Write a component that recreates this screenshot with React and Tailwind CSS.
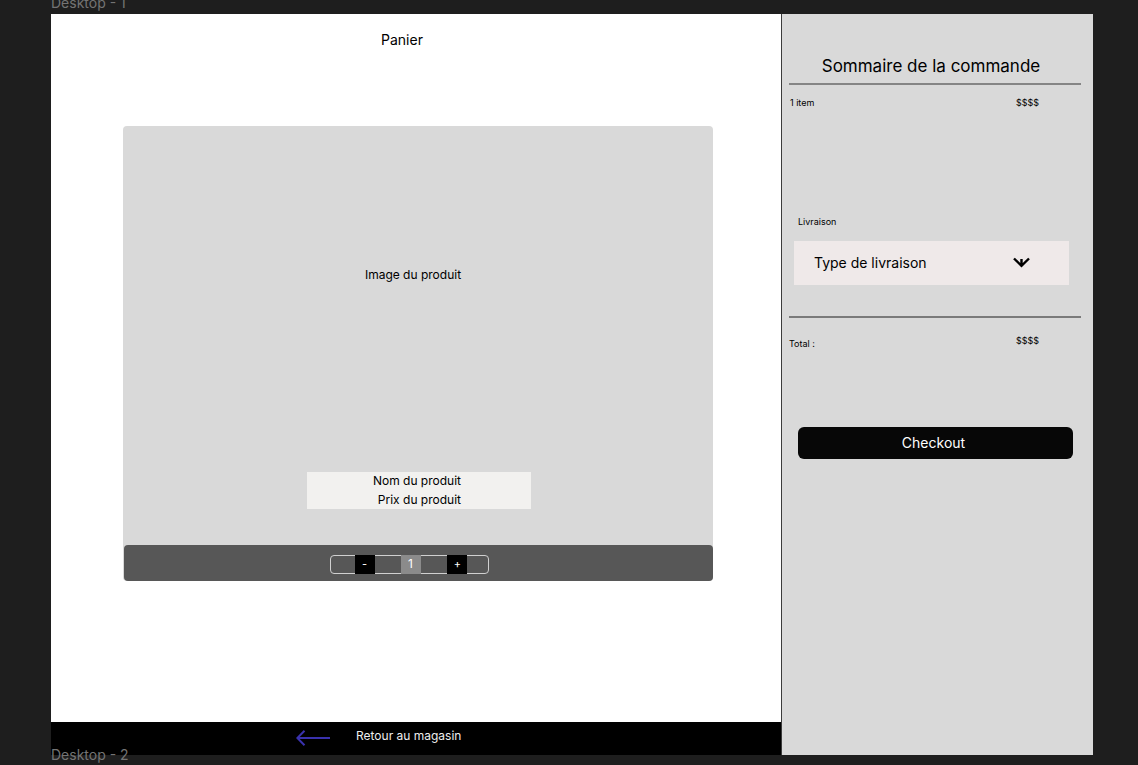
function FrameLabel({ children }) {
  return <p className="text-[14px] leading-5 text-[#747474]">{children}</p>;
}

function BackArrow() {
  return (
    <svg width="34" height="16" viewBox="0 0 34 16" fill="none" stroke="#3a32ae" strokeWidth="2" aria-hidden="true">
      <path d="M34 8H1.5M8.5 0.7L1.3 8L8.5 15.3" />
    </svg>
  );
}

function DownArrow() {
  return (
    <svg
      className="pointer-events-none absolute top-4 right-[39px]"
      width="17"
      height="12"
      viewBox="0 0 17 12"
      fill="none"
      stroke="#000"
      strokeWidth="2.4"
      aria-hidden="true"
    >
      <path d="M1 1.5L8.5 8.8L16 1.5M8.5 2V9" />
    </svg>
  );
}

function Product() {
  return (
    <article className="mt-[76px] mr-[68px] ml-[72px] flex flex-col rounded-[4px] bg-[#d9d9d9]">
      <div className="flex h-[346px] justify-center pt-[139px] pr-2.5">
        <p className="text-[12px] leading-5">Image du produit</p>
      </div>
      <div className="ml-0.5 flex w-56 flex-col gap-px self-center bg-[#f2f1ef] pr-[70px] text-right text-[12px] leading-[18px]">
        <h2>Nom du produit</h2>
        <p>Prix du produit</p>
      </div>
      <div className="mt-9 ml-px flex h-9 items-center justify-center rounded-[4px] bg-[#575757] pr-[18px] pt-0.5">
        <div className="flex h-[19px] w-[159px] items-stretch justify-center gap-[26px] rounded-[4px] border border-[#d0d0d0] pl-0.5 text-[11px] leading-4 text-white">
          <button type="button" aria-label="Diminuer la quantité" className="-my-px w-5 bg-black">-</button>
          <input
            type="text"
            aria-label="Quantité"
            defaultValue="1"
            className="-my-px w-5 bg-[#8b8b8b] text-center text-[12px]"
          />
          <button type="button" aria-label="Augmenter la quantité" className="-my-px w-5 bg-black pl-0.5">+</button>
        </div>
      </div>
    </article>
  );
}

function Summary() {
  return (
    <aside className="w-[312px] shrink-0 border-l border-[#3c3c3c] bg-[#d9d9d9] pr-3 pl-[7px]">
      <h2 className="border-b-2 border-[#858585] pt-10 pb-[5px] pr-2 text-center text-[17px] leading-6">
        Sommaire de la commande
      </h2>
      <div className="mt-3 flex justify-between pr-[42px] pl-px text-[9px] leading-3">
        <span>1 item</span>
        <span>$$$$</span>
      </div>
      <div className="mt-[107px] mr-3 ml-[5px]">
        <label htmlFor="livraison" className="block pl-1 text-[9px] leading-3">
          Livraison
        </label>
        <div className="relative mt-[13px]">
          <select
            id="livraison"
            className="h-11 w-full appearance-none bg-[#efe9e9] px-5 text-[14px] leading-5"
          >
            <option>Type de livraison</option>
          </select>
          <DownArrow />
        </div>
      </div>
      <div className="mt-[31px] flex justify-between border-t-2 border-[#7a7a7a] pt-[17px] pr-[42px] text-[9px] leading-3">
        <span className="pt-[3px]">Total :</span>
        <span>$$$$</span>
      </div>
      <div className="mt-[77px] mr-2 ml-[9px]">
        <button type="button" className="block h-8 w-full rounded-[6px] bg-[#070707] pr-1 text-[14px] leading-5 text-white">
          Checkout
        </button>
      </div>
    </aside>
  );
}

export default function App() {
  return (
    <div className="flex h-screen min-h-[765px] flex-col overflow-hidden bg-[#1e1e1e] pr-[45px] pl-[51px] font-[Inter,sans-serif] text-black">
      <div className="flex h-3.5 flex-col justify-end pb-px">
        <FrameLabel>Desktop - 1</FrameLabel>
      </div>
      <div className="flex flex-1">
        <main className="flex min-w-0 flex-1 flex-col bg-white">
          <h1 className="pt-4 pr-7 text-center text-[14px] leading-5">Panier</h1>
          <Product />
          <footer className="mt-auto flex h-[33px] bg-black pl-[245px]">
            <a href="#magasin" className="flex gap-[26px] text-[12px] text-[#eeeeee]">
              <span className="pt-2">
                <BackArrow />
              </span>
              <span className="pt-1 leading-5">Retour au magasin</span>
            </a>
          </footer>
        </main>
        <Summary />
      </div>
      <div className="relative -mt-2.5 h-5">
        <FrameLabel>Desktop - 2</FrameLabel>
      </div>
    </div>
  );
}
